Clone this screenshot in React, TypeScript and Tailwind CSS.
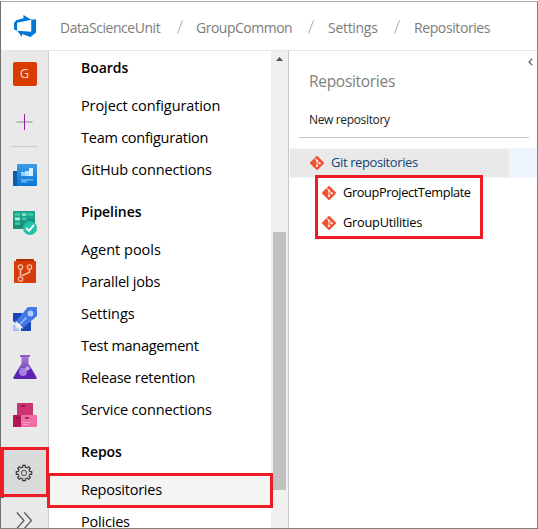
import React from "react";

const sections = [
  {
    title: "Boards",
    items: [
      { label: "Project configuration", tracking: "tracking-[-0.1px]" },
      { label: "Team configuration", tracking: "tracking-[-0.25px]" },
      { label: "GitHub connections", tracking: "tracking-[-0.15px]" },
    ],
  },
  {
    title: "Pipelines",
    items: [
      { label: "Agent pools", tracking: "tracking-[0px]" },
      { label: "Parallel jobs", tracking: "tracking-[-0.2px]" },
      { label: "Settings", tracking: "tracking-[0px]" },
      { label: "Test management", tracking: "tracking-[-0.3px]" },
      { label: "Release retention", tracking: "tracking-[-0.25px]" },
      { label: "Service connections", tracking: "tracking-[-0.15px]" },
    ],
  },
  {
    title: "Repos",
    items: [
      { label: "Repositories", tracking: "tracking-[-0.25px]" },
      { label: "Policies", tracking: "tracking-[-0.2px]" },
    ],
  },
];

function AzureLogo() {
  return (
    <svg width="22" height="22" viewBox="1 1 16 16" className="block">
      <path
        fill="#0078d7"
        d="M17 4v9.740l-4 3.280-6.200-2.260V17l-3.510-4.590 10.230.8V4.440zm-3.410.490L7.850 1v2.290L2.580 4.840 1 6.870v4.610l2.260 1V6.570z"
      />
    </svg>
  );
}

function BoardsIcon() {
  return (
    <svg width="24" height="22" viewBox="0 0 24 22" className="block">
      <defs>
        <linearGradient id="boards" x1="0" y1="0" x2="0" y2="1">
          <stop offset="0" stopColor="#3c9be8" />
          <stop offset="1" stopColor="#0877d4" />
        </linearGradient>
      </defs>
      <path d="M0 7h5v15H1q-1 0-1-1Z" fill="#0c5ca8" />
      <rect x="4" y="0" width="20" height="22" rx="1" fill="url(#boards)" />
      <path d="M8 8h4V7h4V4h4v8H8Z" fill="#d9efff" />
      <path d="M12 7h4v5h-4Z" fill="#b9e0ff" />
      <path d="M8 8.500h4V12H8Z" fill="#8fcaf9" />
      <path d="M8 15h12v1.700h-6v2H8Z" fill="#5baeea" />
    </svg>
  );
}

function GreenIcon() {
  return (
    <svg width="24" height="24" viewBox="0 0 24 24" className="block">
      <rect width="22" height="18" rx="1" fill="#1b8f7a" />
      <rect width="22" height="8" rx="1" fill="#23a088" />
      <path d="M2 2h5v3H2ZM15 2h5v3h-5ZM9 6.500h4.500v3H9ZM2 11h5v3H2Z" fill="#35c7a5" />
      <path d="M9 2h4.500v3H9Z" fill="#6fe0c2" />
      <path d="M2 6.500h5v3H2Z" fill="#a5f5de" />
      <circle cx="17" cy="17" r="7" fill="#1fc3a7" />
      <path d="m13.200 17 2.800 2.800 5-6" fill="none" stroke="#fff" strokeWidth="1.900" />
    </svg>
  );
}

function ReposIcon() {
  return (
    <svg width="22" height="24" viewBox="0 0 22 24" className="block">
      <path d="M2 4V1q0-1 1-1h16q1 0 1 1v3Z" fill="#ad2c05" />
      <path d="M1 2h20q1 0 1 1v20q0 1-1 1H1q-1 0-1-1V3q0-1 1-1Z" fill="#d83b06" />
      <path d="M4 0h14v2H4Z" fill="#ad2c05" />
      <g fill="none" stroke="#f7b8a3" strokeWidth="1.300">
        <circle cx="6.500" cy="8" r="2.200" />
        <circle cx="15.500" cy="8" r="2.200" />
        <circle cx="6.500" cy="20" r="2.200" />
        <path d="M6.500 10.200v7.500M15.500 10.200v3L8 16.700" strokeWidth="1.700" />
      </g>
    </svg>
  );
}

function RocketIcon() {
  return (
    <svg width="24" height="24" viewBox="0 0 24 24" className="block">
      <path d="M0 6h9l3 5-8 6-4-3ZM8 20l7-7 3 2v9H8Z" fill="#1747b8" />
      <path d="M23 0h-8L3 14l7 7L24 9V1q0-1-1-1Z" fill="#4377e6" />
      <circle cx="17.500" cy="6.500" r="2.900" fill="#b4cbff" />
      <path d="m6.500 17.500 7-7" stroke="#9dbbff" strokeWidth="1.600" />
      <path d="m2.500 13.500 8 8-3.500-.5L3 17Z" fill="#f4f7ff" />
      <path d="M0 18h2.500v3.500H6V24H0Z" fill="#a6c0fb" />
    </svg>
  );
}

function FlaskIcon() {
  return (
    <svg width="24" height="24" viewBox="0 0 24 24" className="block">
      <defs>
        <linearGradient id="flask" x1="0" y1="0" x2="0" y2="1">
          <stop offset="0" stopColor="#a57fd4" />
          <stop offset="1" stopColor="#5a22b0" />
        </linearGradient>
      </defs>
      <path d="M8.500 1h7v7.500L23.500 22q.8 2-1.200 2H1.700Q-.3 24 .5 22l8-13.500Z" fill="url(#flask)" />
      <rect x="7" width="10" height="2" rx=".5" fill="#8a5cc9" />
      <path d="M5.500 14h13l3 6.500q0 1.500-1 1.500h-17q-1 0-1-1.500Z" fill="#5b20b5" />
      <circle cx="10" cy="17" r="4" fill="#a67fe3" />
      <circle cx="14.500" cy="13.500" r="2" fill="#c9acf1" />
    </svg>
  );
}

function ArtifactsIcon() {
  return (
    <svg width="24" height="24" viewBox="0 0 24 24" className="block">
      <rect x="4" width="16" height="12.500" rx=".5" fill="#cc3370" />
      <rect y="12" width="9" height="12" rx=".5" fill="#b51659" />
      <rect x="8" y="12" width="16" height="12" rx=".5" fill="#ef6fa5" />
      <path d="M8 2h4v1.800H8ZM3 14h3.500v1.800H3Z" fill="#8e1247" />
      <path d="M12 14h4v1.800h-4Z" fill="#a8245c" />
      <path d="M10 19.500h7M10 21.500h5" stroke="#f8a5c7" strokeWidth="1" />
    </svg>
  );
}

function GearIcon() {
  const teeth = [0, 45, 90, 135, 180, 225, 270, 315];
  return (
    <svg width="18" height="18" viewBox="-9 -9 18 18" className="block" fill="none" stroke="#3c3c3c" strokeWidth="1.200">
      {teeth.map((a) => (
        <path key={a} transform={`rotate(${a})`} d="M-2.200-5.300-1.300-5.900V-7.700H1.300V-5.900L2.200-5.300" />
      ))}
      <circle r="2.600" stroke="#666" />
    </svg>
  );
}

function GitIcon() {
  return (
    <svg width="14" height="14" viewBox="0 0 14 14" className="block shrink-0">
      <path d="M6.300.3q.7-.6 1.400 0l6 6q.6.700 0 1.400l-6 6q-.7.600-1.400 0l-6-6q-.6-.7 0-1.400Z" fill="#f05133" />
      <path d="m4.700 2 2.300 2.600V10M7 4.700l2.700 2.600" stroke="#fff" strokeWidth=".9" fill="none" />
      <circle cx="7" cy="4.600" r="1" fill="#fff" />
      <circle cx="7" cy="10" r="1.100" fill="#fff" />
      <circle cx="9.700" cy="7.300" r="1.100" fill="#fff" />
    </svg>
  );
}

function Slash() {
  return (
    <svg width="6" height="14" viewBox="0 0 6 14" className="block">
      <path d="M5.500.5.500 13.500" stroke="#aaa" strokeWidth="1" />
    </svg>
  );
}

export default function App() {
  return (
    <div className="relative h-[529px] w-[538px] overflow-hidden bg-white pt-px font-['Open_Sans','Noto_Sans',sans-serif]">
      <div className="flex h-[528px] flex-col border border-t-[#a6a6a6] border-r-[#808080] border-b-[#808080] border-l-[#707070]">
        <header className="flex h-[49px] shrink-0 items-center border-b border-[#e6e6e6] pl-[13px] text-[14px] text-[#7c7c7c]">
          <AzureLogo />
          <div className="flex items-center pt-[2px]">
            <span className="ml-[24px] w-[117px] whitespace-nowrap tracking-[-0.45px]">DataScienceUnit</span>
            <Slash />
            <span className="ml-[13px] w-[112px] whitespace-nowrap tracking-[-0.5px]">GroupCommon</span>
            <Slash />
            <span className="ml-[14px] w-[66px] whitespace-nowrap tracking-[-0.3px]">Settings</span>
            <Slash />
            <span className="ml-[14px] whitespace-nowrap tracking-[-0.4px]">Repositories</span>
          </div>
        </header>

        <div className="flex min-h-0 flex-1">
          <aside className="flex w-[48px] shrink-0 flex-col items-center overflow-hidden border-r border-[#ccc] bg-[#e9e9e9] pt-[11px]">
            <div className="flex size-[24px] shrink-0 items-center justify-center rounded-[2px] bg-[#da3b01] text-[13px] text-[#fbd9cc]">
              G
            </div>
            <div className="flex h-[60px] w-full shrink-0 flex-col items-center pt-[28px]">
              <svg width="17" height="17" viewBox="0 0 17 17" className="block">
                <path d="M0 8.500h17" stroke="#888" />
                <path d="M8.500 0v17" stroke="#881798" />
              </svg>
              <div className="mt-[15px] h-px w-[27px] shrink-0 translate-y-px bg-[#ccc]" />
            </div>
            <div className="flex h-[281px] shrink-0 flex-col items-center pt-[18px]">
              <div className="h-[47px]"><BoardsIcon /></div>
              <div className="h-[48px]"><GreenIcon /></div>
              <div className="h-[48px]"><ReposIcon /></div>
              <div className="h-[48px]"><RocketIcon /></div>
              <div className="h-[48px]"><FlaskIcon /></div>
              <ArtifactsIcon />
            </div>
            <div className="mt-[20px] flex h-[51px] w-full shrink-0 items-center justify-center border-l-[3px] border-[#2b6ca8] bg-[#dadada] pr-[4px]">
              <GearIcon />
            </div>
            <svg width="17" height="17" viewBox="0 0 17 17" className="mt-[14px] block shrink-0">
              <path d="m.8.500 7.200 8-7.200 8M8.300.500l7.200 8-7.200 8" fill="none" stroke="#555" strokeWidth="1.200" />
            </svg>
          </aside>

          <nav className="w-[222px] shrink-0 overflow-hidden text-[14.5px] text-black">
            {sections.map((s, i) => (
              <section key={s.title}>
                <h2
                  className={`flex items-center pl-[32px] text-[14px] font-semibold tracking-[-0.05px] ${
                    i === 0 ? "h-[39px] pb-[7px]" : "h-[48px] pt-[2px]"
                  }`}
                >
                  {s.title}
                </h2>
                {s.items.map((item) => (
                  <div
                    key={item.label}
                    className={`flex h-[32px] items-center pl-[32px] leading-[20px] ${item.tracking} ${
                      item.label === "Repositories" ? "bg-[#f4f4f4]" : ""
                    }`}
                  >
                    {item.label}
                  </div>
                ))}
              </section>
            ))}
          </nav>

          <div className="flex w-[17px] shrink-0 flex-col items-center bg-[#f0f0f0]">
            <svg width="7" height="4" viewBox="0 0 7 4" className="mt-[6px] block shrink-0">
              <path d="M0 4 3.500 0 7 4Z" fill="#505050" />
            </svg>
            <div className="mt-[171px] h-[258px] w-[13px] shrink-0 bg-[#c1c1c1]" />
          </div>

          <main className="min-w-0 flex-1 border-l border-[#c8c8c8]">
            <div className="flex h-[46px] items-start justify-between pl-[20px] pr-[4px]">
              <h1 className="pt-[18px] text-[15.5px] leading-[24px] tracking-[-0.3px] text-[#808080]">Repositories</h1>
              <svg width="5" height="8" viewBox="0 0 5 8" className="mt-[7px] block">
                <path d="M4.300.700 1 4l3.300 3.300" fill="none" stroke="#666" strokeWidth="1.300" />
              </svg>
            </div>
            <div className="ml-[10px] mr-[8px] flex h-[41px] items-end border-b border-[#c8c8c8] pb-[8px] pl-[10px] text-[12px] leading-[18px] tracking-[-0.35px] text-[#222]">
              New repository
            </div>
            <div className="mt-[10px] flex h-[30px] bg-[#eff6fd] pb-px pt-px">
              <div className="ml-px flex w-[219px] items-center gap-[7px] bg-[#e9e9e9] pl-[20px] text-[13px] text-[#10457a]">
                <GitIcon />
                <span className="tracking-[-0.4px]">Git repositories</span>
              </div>
            </div>
            {["GroupProjectTemplate", "GroupUtilities"].map((r) => (
              <div key={r} className="flex h-[30px] items-center gap-[7px] pl-[33px] text-[12.800px] text-black">
                <GitIcon />
                <span className={r === "GroupUtilities" ? "tracking-[-0.25px]" : "tracking-[-0.4px]"}>{r}</span>
              </div>
            ))}
          </main>
        </div>
      </div>

      <div className="absolute left-0 top-[447px] h-[50px] w-[49px] border-[3px] border-[#ed1c24]" />
      <div className="absolute left-[47px] top-[473px] h-[35px] w-[226px] border-[3px] border-[#ed1c24]" />
      <div className="absolute left-[315px] top-[175px] h-[64px] w-[168px] border-[3px] border-[#ed1c24]" />
    </div>
  );
}
